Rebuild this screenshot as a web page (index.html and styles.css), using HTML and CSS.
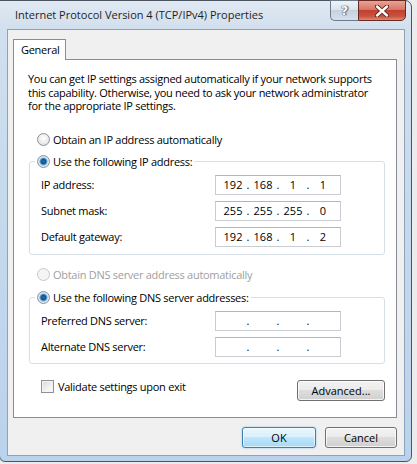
FILE: index.html
```html
<!DOCTYPE html>
<html lang="en">
<head>
<meta charset="UTF-8">
<meta name="viewport" content="width=device-width, initial-scale=1.0">
<title>Internet Protocol Version 4 (TCP/IPv4) Properties</title>
<link rel="stylesheet" href="styles.css">
</head>
<body>
<div class="window">
  <div class="titlebar">
    <span class="title">Internet Protocol Version 4 (TCP/IPv4) Properties</span>
    <div class="caption-buttons">
      <div class="cap-help">?</div>
      <div class="cap-close">
        <svg width="14" height="12" viewBox="0 0 14 12">
          <path d="M2 1.5 L12 10.5 M12 1.5 L2 10.5" stroke="#5a1a14" stroke-width="4.2" stroke-linecap="round"/>
          <path d="M2 1.5 L12 10.5 M12 1.5 L2 10.5" stroke="#fff" stroke-width="2.4" stroke-linecap="round"/>
        </svg>
      </div>
    </div>
  </div>

  <div class="client">
    <div class="tabs">
      <div class="tab">General</div>
    </div>

    <div class="panel">
      <p class="intro">You can get IP settings assigned automatically if your network supports<br>
      this capability. Otherwise, you need to ask your network administrator<br>
      for the appropriate IP settings.</p>

      <label class="option first"><input type="radio" name="ip"><span>Obtain an IP address automatically</span></label>

      <fieldset class="group">
        <legend><label class="option"><input type="radio" name="ip" checked><span>Use the following IP address:</span></label></legend>
        <div class="row">
          <span class="row-label">IP address:</span>
          <div class="ipbox"><span>192</span><i>.</i><span>168</span><i>.</i><span>1</span><i>.</i><span>1</span></div>
        </div>
        <div class="row">
          <span class="row-label">Subnet mask:</span>
          <div class="ipbox"><span>255</span><i>.</i><span>255</span><i>.</i><span>255</span><i>.</i><span>0</span></div>
        </div>
        <div class="row">
          <span class="row-label">Default gateway:</span>
          <div class="ipbox"><span>192</span><i>.</i><span>168</span><i>.</i><span>1</span><i>.</i><span>2</span></div>
        </div>
      </fieldset>

      <label class="option dns-auto disabled"><input type="radio" name="dns" disabled><span>Obtain DNS server address automatically</span></label>

      <fieldset class="group dns">
        <legend><label class="option"><input type="radio" name="dns" checked><span>Use the following DNS server addresses:</span></label></legend>
        <div class="row">
          <span class="row-label">Preferred DNS server:</span>
          <div class="ipbox"><span></span><i>.</i><span></span><i>.</i><span></span><i>.</i><span></span></div>
        </div>
        <div class="row">
          <span class="row-label">Alternate DNS server:</span>
          <div class="ipbox"><span></span><i>.</i><span></span><i>.</i><span></span><i>.</i><span></span></div>
        </div>
      </fieldset>

      <div class="bottom-row">
        <label class="check"><input type="checkbox"><span>Validate settings upon exit</span></label>
        <button class="btn advanced">Advanced...</button>
      </div>
    </div>

    <div class="dialog-buttons">
      <button class="btn default">OK</button>
      <button class="btn">Cancel</button>
    </div>
  </div>
</div>
</body>
</html>
```

FILE: styles.css
```css
:root {
  --texto: #000;
  --cliente: #f0f0f0;
  --borda-aba: #898c95;
  --borda-grupo: #d5dfe5;
  --borda-input: #c9cdd3;
  --fonte: "Open Sans", "Noto Sans", sans-serif;
}

* {
  box-sizing: border-box;
}

body {
  margin: 0;
  width: 417px;
  height: 464px;
  background: #ececec;
  font-family: var(--fonte);
  font-size: 11px;
  letter-spacing: -0.28px;
  color: var(--texto);
  overflow: hidden;
}

.window {
  margin-left: -1px;
  width: 413px;
  height: 462px;
  border: 1px solid #4a5560;
  border-radius: 0 7px 6px 6px;
  background: linear-gradient(to bottom, #e0e9f3 0, #d2dfed 28px, #c8dbee 160px, #bad2eb 100%);
  padding: 0 6px 0 7px;
}

/* barra de titulo */
.titlebar {
  height: 28px;
  display: flex;
  align-items: flex-start;
  justify-content: space-between;
}

.title {
  margin: 6px 0 0 8px;
  font-size: 11px;
  letter-spacing: 0;
  color: #1e1e1e;
}

.caption-buttons {
  display: flex;
  margin-top: -1px;
  margin-right: -1px;
}

.cap-help,
.cap-close {
  height: 21px;
  border: 1px solid #6d7b8b;
  display: flex;
  align-items: center;
  justify-content: center;
}

.cap-help {
  width: 28px;
  border-right: none;
  border-radius: 0 0 0 5px;
  background: linear-gradient(to bottom, #eef3f9 0, #dbe4ee 45%, #c4d1df 50%, #d5e0ec 100%);
  font-family: "DejaVu Sans", sans-serif;
  font-weight: bold;
  font-size: 13px;
  color: #fff;
  text-shadow: 0 0 1px #3c4756, 0 0 1px #3c4756, 1px 0 1px #3c4756;
}

.cap-close {
  width: 48px;
  border-color: #6a2a24;
  border-radius: 0 0 5px 0;
  background: linear-gradient(to bottom, #e8a497 0, #d87564 45%, #c2402e 50%, #c9523f 80%, #dc8a6e 100%);
}

/* area cliente */
.client {
  height: 427px;
  border: 1px solid #8fa3b8;
  background: var(--cliente);
  padding: 9px 7px 0 5px;
}

.tabs {
  display: flex;
  height: 20px;
}

.tab {
  position: relative;
  z-index: 1;
  width: 53px;
  height: 21px;
  border: 1px solid var(--borda-aba);
  border-bottom: none;
  background: #fff;
  padding: 2px 0 0 7px;
}

.panel {
  height: 359px;
  border: 1px solid var(--borda-aba);
  background: #fff;
  padding: 0 11px 0 0;
}

.intro {
  margin: 12px 0 0 14px;
  line-height: 13.5px;
  white-space: nowrap;
}

/* opcoes de radio */
.option {
  display: flex;
  align-items: center;
  height: 16px;
  white-space: nowrap;
}

.option.first {
  margin: 19px 0 0 23px;
}

.option.dns-auto {
  margin: 12px 0 0 23px;
}

.option.disabled {
  color: #a0a0a0;
}

.option input {
  appearance: none;
  margin: 0 3px 0 0;
  width: 13px;
  height: 13px;
  border-radius: 50%;
  border: 1px solid #8e9296;
  background: radial-gradient(circle at 50% 40%, #ffffff 0, #f2f2f2 40%, #d5d5d5 100%);
}

.option input:checked {
  background: radial-gradient(circle at 50% 50%, #2c6fa8 0, #1b4f84 2.4px, #5ea7df 3.4px, #cfe4f4 4.4px, #e8eef3 100%);
}

.option input:disabled {
  border-color: #c8c8c8;
  background: #f4f4f4;
}

/* caixas de grupo */
.group {
  margin: 6px 0 0 15px;
  border: 1px solid var(--borda-grupo);
  border-radius: 3px;
  padding: 5px 0 7px 11px;
  width: 356px;
}

.group.dns {
  margin-top: 7px;
  padding-bottom: 6px;
}

.group legend {
  padding: 0 2px;
  margin-left: -6px;
}

.row {
  display: flex;
  align-items: center;
  height: 20px;
  margin-bottom: 6px;
}

.row:last-child {
  margin-bottom: 0;
}

.row-label {
  width: 174px;
}

.ipbox {
  display: flex;
  width: 126px;
  height: 20px;
  border: 1px solid var(--borda-input);
  border-top-color: #b2b6bc;
  padding-left: 5px;
  align-items: center;
  letter-spacing: 0;
}

.ipbox span {
  width: 24px;
  text-align: center;
}

.ipbox i {
  font-style: normal;
  width: 6px;
  text-align: center;
}

/* linha de baixo */
.bottom-row {
  display: flex;
  justify-content: space-between;
  align-items: flex-start;
  margin: 16px 0 0 27px;
}

.check {
  display: flex;
  align-items: center;
  height: 13px;
}

.check input {
  appearance: none;
  margin: 0 4px 0 0;
  width: 13px;
  height: 13px;
  border: 1px solid #8e9296;
  background: linear-gradient(135deg, #d8d8d8 0, #f2f2f2 60%, #ffffff 100%);
  box-shadow: inset 0 0 0 1px #f4f4f4;
}

/* botoes */
.btn {
  font-family: var(--fonte);
  font-size: 11px;
  color: #000;
  height: 21px;
  border: 1px solid #707070;
  border-radius: 3px;
  background: linear-gradient(to bottom, #f2f2f2 0, #ebebeb 50%, #dddddd 50%, #cfcfcf 100%);
  box-shadow: inset 0 0 0 1px rgba(255, 255, 255, 0.75);
  padding: 0;
}

.btn.advanced {
  width: 88px;
}

.btn.default {
  width: 74px;
  border-color: #3c7fb1;
  background: linear-gradient(to bottom, #eaf6fd 0, #d9f0fc 50%, #bee6fd 50%, #a7d9f5 100%);
  box-shadow: inset 0 0 0 1px rgba(255, 255, 255, 0.6), 0 0 2px #7fc4ee;
}

.dialog-buttons {
  display: flex;
  justify-content: flex-end;
  gap: 9px;
  margin-top: 9px;
}

.dialog-buttons .btn:last-child {
  width: 72px;
}
```
